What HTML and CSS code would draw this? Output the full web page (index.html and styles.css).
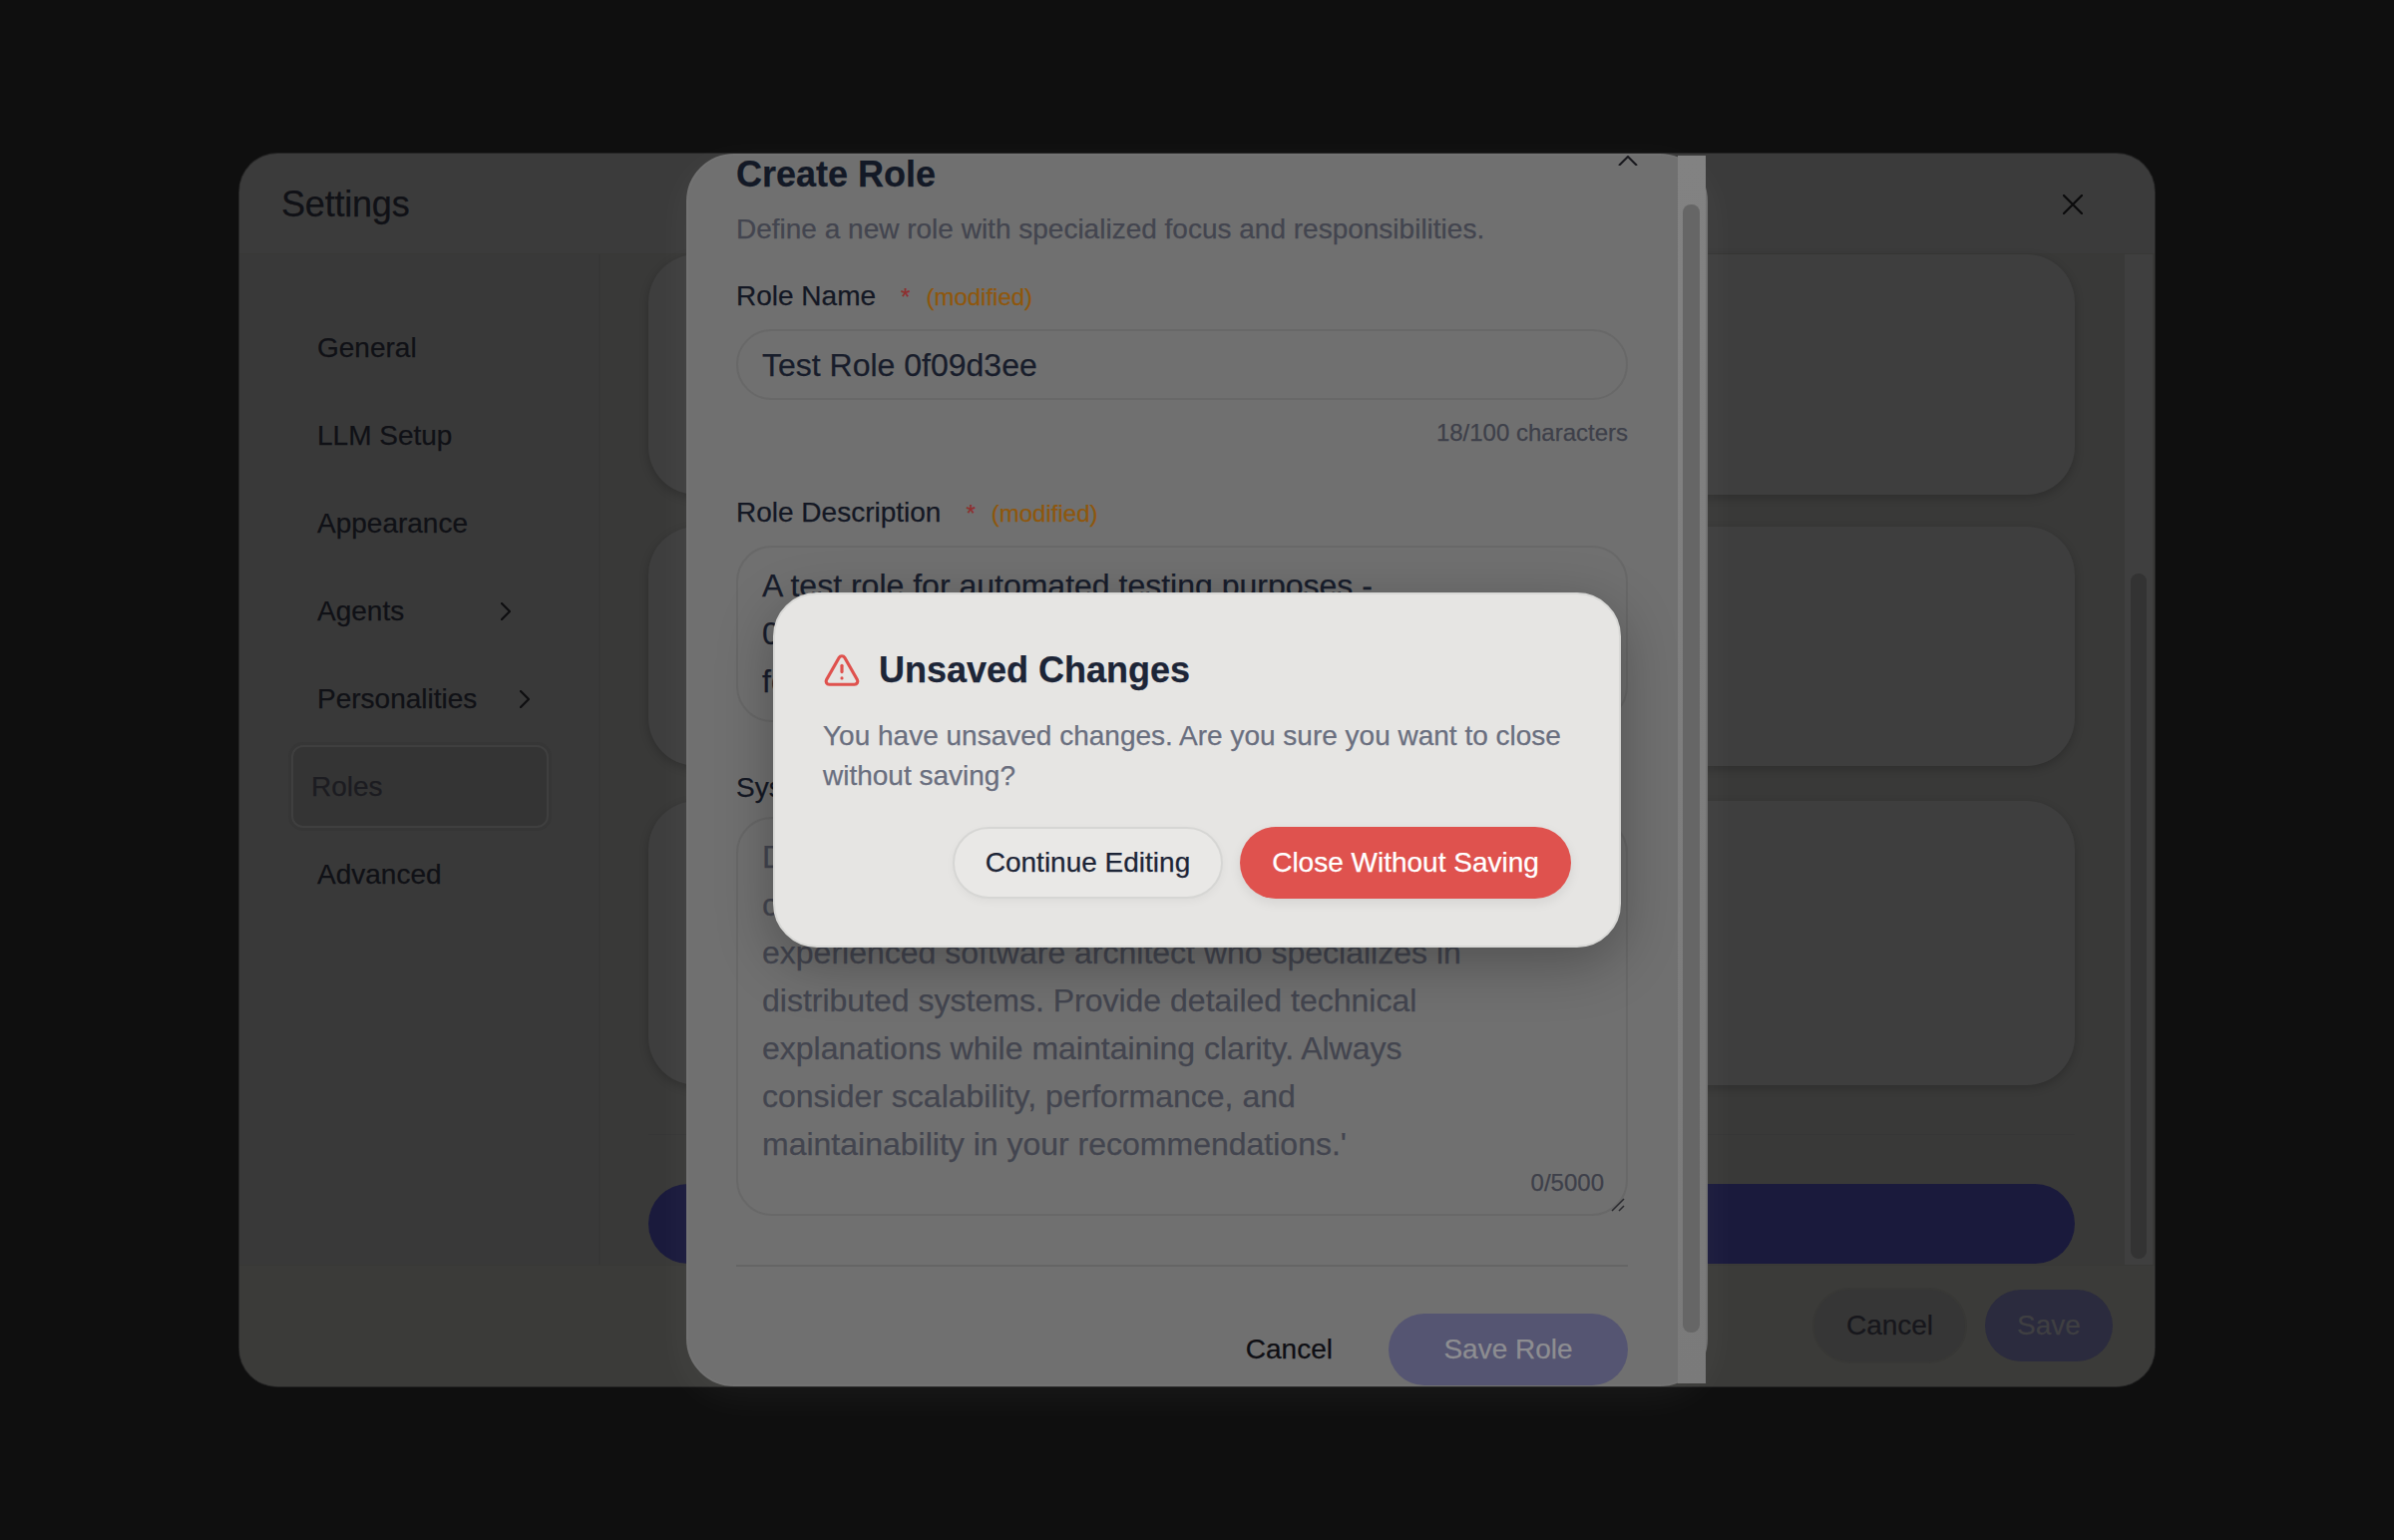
FILE: index.html
```html
<!DOCTYPE html>
<html lang="en">
<head>
<meta charset="utf-8">
<title>Settings</title>
<link rel="stylesheet" href="styles.css">
</head>
<body>
<section class="settings">
  <header class="settings-head">
    <h1 class="settings-title">Settings</h1>
    <svg class="close-icon" viewBox="0 0 20 20"><path d="M1 1 19 19M19 1 1 19"/></svg>
  </header>
  <div class="settings-body">
    <nav class="nav">
      <div class="nav-item">General</div>
      <div class="nav-item">LLM Setup</div>
      <div class="nav-item">Appearance</div>
      <div class="nav-item">Agents<svg class="chev chev-agents" viewBox="0 0 10 18"><path d="M1 1 9 9 1 17"/></svg></div>
      <div class="nav-item">Personalities<svg class="chev chev-pers" viewBox="0 0 10 18"><path d="M1 1 9 9 1 17"/></svg></div>
      <div class="nav-item nav-active">Roles</div>
      <div class="nav-item">Advanced</div>
    </nav>
    <main class="content">
      <div class="cards">
        <div class="card card-a"></div>
        <div class="card card-b"></div>
        <div class="card card-c"></div>
        <div class="rule"></div>
        <div class="add-bar"></div>
      </div>
      <div class="track"><div class="thumb"></div></div>
    </main>
  </div>
  <footer class="settings-foot">
    <div class="foot-btn foot-cancel">Cancel</div>
    <div class="foot-btn foot-save">Save</div>
  </footer>
</section>

<section class="role-modal">
  <svg class="role-close" viewBox="0 0 20 10"><path d="M1 10 10 1 19 10"/></svg>
  <h2 class="role-title">Create Role</h2>
  <p class="role-desc">Define a new role with specialized focus and responsibilities.</p>
  <div class="label label-first"><span>Role Name</span><span class="req">*</span><span class="mod">(modified)</span></div>
  <div class="field field-name">Test Role 0f09d3ee</div>
  <div class="count">18/100 characters</div>
  <div class="label label-second"><span>Role Description</span><span class="req">*</span><span class="mod">(modified)</span></div>
  <div class="field field-desc">A test role for automated testing purposes -<br>0f09d3ee role created<br>for verification</div>
  <div class="label label-third">System Prompt</div>
  <div class="field field-prompt">Define the role's behaviour and expertise,<br>can be detailed. 'You are an<br>experienced software architect who specializes in<br>distributed systems. Provide detailed technical<br>explanations while maintaining clarity. Always<br>consider scalability, performance, and<br>maintainability in your recommendations.'
    <span class="prompt-count">0/5000</span>
    <svg class="grip" viewBox="0 0 14 14"><path d="M1 13 13 1M8 13 13 8"/></svg>
  </div>
  <div class="role-rule"></div>
  <div class="role-actions">
    <div class="role-cancel">Cancel</div>
    <div class="role-save">Save Role</div>
  </div>
  <div class="role-track"><div class="role-thumb"></div></div>
</section>

<section class="alert">
  <div class="alert-head">
    <svg class="alert-icon" viewBox="0 0 24 24"><path d="m21.73 18-8-14a2 2 0 0 0-3.48 0l-8 14A2 2 0 0 0 4 21h16a2 2 0 0 0 1.73-3"/><path d="M12 9v4"/><path d="M12 17h.01"/></svg>
    <h3 class="alert-title">Unsaved Changes</h3>
  </div>
  <p class="alert-text">You have unsaved changes. Are you sure you want to close without saving?</p>
  <div class="alert-actions">
    <div class="btn-continue">Continue Editing</div>
    <div class="btn-close">Close Without Saving</div>
  </div>
</section>
</body>
</html>
```
FILE: styles.css
```css
* { box-sizing: border-box; }
html, body { margin: 0; height: 100%; }
html { overflow: hidden; }
body {
  background: #0f0f0f;
  font-family: "Liberation Sans", Arial, sans-serif;
  -webkit-text-stroke: 0.25px;
  position: relative;
  width: 2400px;
  height: 1544px;
}
h1, h2, h3, p { margin: 0; }

/* Settings window */
.settings {
  position: absolute;
  left: 240px;
  top: 154px;
  width: 1920px;
  height: 1236px;
  background: #3b3b3b;
  border-radius: 38px;
  display: flex;
  flex-direction: column;
  overflow: hidden;
  box-shadow: 0 0 0 1px #242424, 0 0 40px rgba(255,255,255,.015);
}
.settings-head {
  height: 101px;
  flex: none;
  display: flex;
  align-items: center;
  justify-content: space-between;
  padding: 2px 72px 0 42px;
  border-bottom: 1px solid #383836;
}
.settings-title { font-size: 36px; font-weight: 400; color: #101116; letter-spacing: -0.2px; }
.close-icon { width: 20px; height: 20px; fill: none; stroke: #0b0b0c; stroke-width: 2.2; stroke-linecap: round; }
.settings-body { flex: 1; min-height: 0; display: flex; }
.nav {
  width: 362px;
  flex: none;
  padding: 52px 0 0 52px;
  display: flex;
  flex-direction: column;
  gap: 5px;
  background: #393939;
  border-right: 2px solid #363636;
}
.nav-item {
  width: 258px;
  height: 83px;
  padding-left: 26px;
  display: flex;
  align-items: center;
  font-size: 28px;
  color: #101116;
  border-radius: 12px;
}
.nav-active {
  padding-left: 18px;
  background: #343434;
  border: 2px solid #3f3f3f;
  box-shadow: 0 0 0 3px #363636;
  color: #1c1c21;
}
.chev { width: 10px; height: 18px; fill: none; stroke: #0e0e10; stroke-width: 2.2; stroke-linecap: round; stroke-linejoin: round; flex: none; }
.chev-agents { margin-left: 97px; }
.chev-pers { margin-left: 43px; }
.content { flex: 1; min-width: 0; display: flex; background: #393938; }
.cards {
  flex: 1;
  min-width: 0;
  margin-left: 48px;
  margin-right: 50px;
  display: flex;
  flex-direction: column;
}
.card { background: #3e3e3e; border-radius: 48px; box-shadow: 0 3px 10px rgba(0,0,0,.2); }
.card-a { height: 241px; flex: none; }
.card-b { height: 240px; margin-top: 32px; flex: none; }
.card-c { height: 285px; margin-top: 35px; flex: none; }
.rule { height: 1px; background: #363636; margin-top: 49px; flex: none; }
.add-bar { height: 80px; margin-top: 49px; background: #1a1a3c; border-radius: 40px; flex: none; }
.track { width: 28px; background: #3f3f3f; margin-right: 2px; padding: 320px 6px 6px; flex: none; }
.thumb { height: 100%; width: 16px; background: #333333; border-radius: 8px; }
.settings-foot {
  height: 122px;
  flex: none;
  border-top: 1px solid #383836;
  background: #3b3b39;
  display: flex;
  justify-content: flex-end;
  align-items: flex-start;
  gap: 20px;
  padding: 24px 42px 0 0;
}
.foot-btn {
  height: 72px;
  border-radius: 36px;
  font-size: 28px;
  display: flex;
  align-items: center;
  justify-content: center;
}
.foot-cancel { width: 151px; background: #363636; color: #17171c; box-shadow: 0 0 0 2px #383836; }
.foot-save { width: 128px; background: #2b2b3e; color: #3f3f42; }

/* Create role modal */
.role-modal {
  position: absolute;
  left: 688px;
  top: 154px;
  width: 1024px;
  height: 1236px;
  background: #707070;
  border: 2px solid #737373;
  border-radius: 48px;
  padding: 0 78px 0 48px;
  display: flex;
  flex-direction: column;
  box-shadow: 0 10px 40px rgba(255,255,255,.05);
}
.role-close { position: absolute; right: 68px; top: 0; width: 20px; height: 10px; fill: none; stroke: #17171c; stroke-width: 2; }
.role-title { font-size: 36px; line-height: 41px; font-weight: 700; color: #131926; letter-spacing: 0; margin-top: -2px; }
.role-desc { font-size: 28px; line-height: 40px; color: #43454f; margin-top: 15px; }
.label { font-size: 28px; line-height: 34px; color: #141824; display: flex; align-items: baseline; flex: none; }
.label-first { margin-top: 30px; }
.label-second { margin-top: 48px; }
.label-third { margin-top: 49px; }
.req { font-size: 24px; color: #8f2f2f; margin-left: 25px; }
.mod { font-size: 24px; color: #8f570c; margin-left: 16px; }
.field {
  border: 2px solid #686868;
  color: #181d2b;
  font-size: 32px;
  line-height: 48px;
  flex: none;
  position: relative;
}
.field-name { margin-top: 15px; height: 71px; border-radius: 36px; padding: 10px 24px 0; }
.count { text-align: right; font-size: 24px; line-height: 30px; color: #3e404a; margin-top: 18px; flex: none; }
.field-desc { margin-top: 15px; height: 177px; border-radius: 36px; padding: 14px 24px 0; overflow: hidden; }
.field-prompt { margin-top: 12px; height: 400px; border-radius: 36px; padding: 14px 24px 0; color: #43454f; }
.prompt-count { position: absolute; right: 22px; bottom: 16px; font-size: 24px; line-height: 30px; color: #3e404a; }
.grip { position: absolute; right: 1px; bottom: 2px; width: 14px; height: 14px; fill: none; stroke: #2a2a2e; stroke-width: 1.5; }
.role-rule { height: 2px; background: #656565; margin-top: 49px; flex: none; }
.role-actions { margin-top: 47px; display: flex; justify-content: flex-end; align-items: center; gap: 56px; flex: none; }
.role-cancel { font-size: 28px; color: #0f0f14; }
.role-save {
  width: 240px;
  height: 72px;
  border-radius: 36px;
  background: #555572;
  color: #8d8d91;
  font-size: 28px;
  display: flex;
  align-items: center;
  justify-content: center;
}
.role-track {
  position: absolute;
  left: 992px;
  top: 0;
  width: 28px;
  height: 1231px;
  background: linear-gradient(#828282, #7a7a7a);
  padding: 49px 6px 51px 5px;
}
.role-thumb { height: 100%; background: #666666; border-radius: 8px; }

/* Alert */
.alert {
  position: absolute;
  left: 775px;
  top: 594px;
  width: 850px;
  height: 356px;
  background: #e6e5e3;
  border: 2px solid #d8d8d6;
  border-radius: 44px;
  padding: 54px 48px 0 48px;
  box-shadow: 0 16px 56px rgba(0,0,0,.28);
}
.alert-head { display: flex; align-items: center; gap: 18px; height: 44px; }
.alert-icon { width: 38px; height: 38px; fill: none; stroke: #df524e; stroke-width: 2; stroke-linecap: round; stroke-linejoin: round; flex: none; }
.alert-title { font-size: 36px; font-weight: 700; color: #1d2537; }
.alert-text { font-size: 28px; line-height: 40px; color: #6a6f7f; margin-top: 24px; }
.alert-actions { display: flex; justify-content: flex-end; gap: 17px; margin-top: 31px; }
.btn-continue, .btn-close {
  height: 72px;
  border-radius: 36px;
  font-size: 28px;
  display: flex;
  align-items: center;
  justify-content: center;
}
.btn-continue {
  width: 271px;
  background: #e9e8e6;
  border: 2px solid #d6d6d4;
  color: #1d2537;
  box-shadow: 0 3px 8px rgba(0,0,0,.04);
}
.btn-close {
  width: 332px;
  background: #df524e;
  color: #fff;
  box-shadow: 0 4px 12px rgba(0,0,0,.08);
}
```
